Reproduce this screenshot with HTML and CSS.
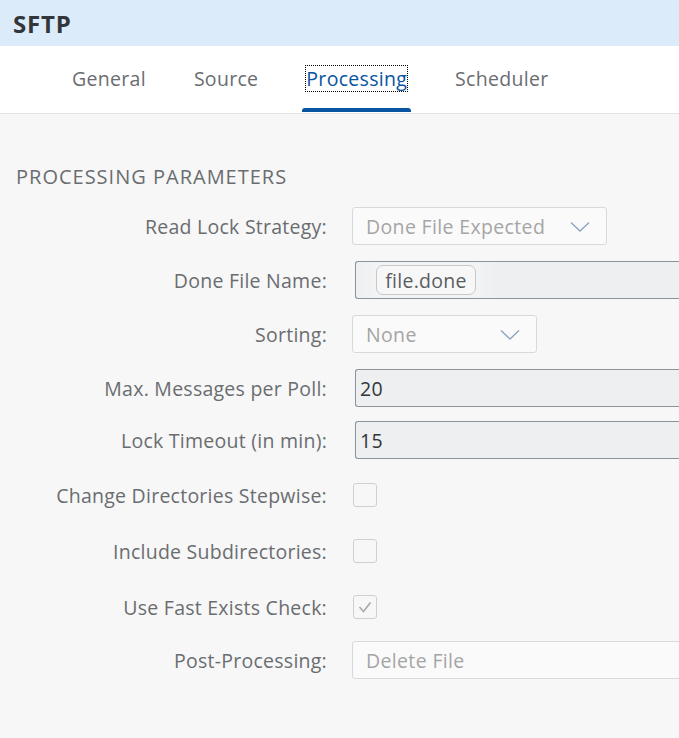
FILE: index.html
```html
<!DOCTYPE html>
<html>
<head>
<meta charset="utf-8">
<link rel="stylesheet" href="styles.css">
</head>
<body>
<div class="page">
  <header class="header"><h1 class="title">SFTP</h1></header>
  <nav class="tabs">
    <div class="tab">General</div>
    <div class="tab">Source</div>
    <div class="tab active"><span class="focus">Processing</span></div>
    <div class="tab">Scheduler</div>
  </nav>
  <main class="content">
    <h2 class="section">PROCESSING PARAMETERS</h2>
    <div class="form">
      <div class="label">Read Lock Strategy:</div>
      <div class="ctl"><div class="select w255"><span>Done File Expected</span><svg class="chev" viewBox="0 0 20 12" width="20" height="12"><path d="M1 1.5 L10 10 L19 1.5" fill="none" stroke="#8aa4c2" stroke-width="1.3"/></svg></div></div>

      <div class="label">Done File Name:</div>
      <div class="ctl"><div class="input tokens"><span class="token">file.done</span></div></div>

      <div class="label">Sorting:</div>
      <div class="ctl"><div class="select w185"><span>None</span><svg class="chev" viewBox="0 0 20 12" width="20" height="12"><path d="M1 1.5 L10 10 L19 1.5" fill="none" stroke="#8aa4c2" stroke-width="1.3"/></svg></div></div>

      <div class="label">Max. Messages per Poll:</div>
      <div class="ctl"><div class="input">20</div></div>

      <div class="label tight">Lock Timeout (in min):</div>
      <div class="ctl tight"><div class="input">15</div></div>

      <div class="label cbrow">Change Directories Stepwise:</div>
      <div class="ctl cbrow"><div class="checkbox"></div></div>

      <div class="label cbrow">Include Subdirectories:</div>
      <div class="ctl cbrow"><div class="checkbox"></div></div>

      <div class="label cbrow">Use Fast Exists Check:</div>
      <div class="ctl cbrow"><div class="checkbox"><svg viewBox="0 0 24 24" width="24" height="24"><path d="M6.5 12 L10.5 16.5 L17.5 7.5" fill="none" stroke="#ababab" stroke-width="1.7"/></svg></div></div>

      <div class="label tight">Post-Processing:</div>
      <div class="ctl tight"><div class="select wide"><span>Delete File</span></div></div>
    </div>
  </main>
</div>
</body>
</html>
```
FILE: styles.css
```css
* { box-sizing: border-box; }
html, body { margin: 0; padding: 0; }
body {
  font-family: "Open Sans", "Noto Sans", sans-serif;
  background: #f7f7f7;
  overflow: hidden;
  width: 679px;
  height: 738px;
}
.page { width: 679px; overflow: hidden; }
.header {
  height: 46px;
  background: #dcebf9;
  display: flex;
  align-items: center;
  padding-left: 13px;
}
.title {
  margin: 0;
  font-size: 24px;
  font-weight: 700;
  color: #32363a;
  letter-spacing: 0.8px;
}
.tabs {
  height: 68px;
  background: #fff;
  border-bottom: 1px solid #e2e2e2;
  display: flex;
  gap: 40px;
  padding-left: 68px;
}
.tab {
  position: relative;
  padding: 0 4px;
  font-size: 19.5px;
  letter-spacing: 0.3px;
  color: #6a6d70;
  display: flex;
  align-items: center;
  height: 67px;
  padding-bottom: 2px;
}
.tab.active { color: #0854a0; }
.tab.active::after {
  content: "";
  position: absolute;
  left: 0; right: 0; bottom: 1px;
  height: 4px;
  background: #0854a0;
  border-radius: 3px 3px 0 0;
}
.focus {
  outline: 1px dotted #000;
  outline-offset: 0;
  line-height: 25px;
  padding: 0;
}
.content { padding: 50px 0 0 0; }
.section {
  margin: 0 0 17px 16px;
  font-size: 20px;
  letter-spacing: 1px;
  font-weight: 400;
  color: #6a6d70;
  line-height: 26px;
}
.form {
  display: grid;
  grid-template-columns: 327px 1fr;
  column-gap: 25px;
  row-gap: 16px;
}
.tight { margin-top: -2px; }
.label {
  text-align: right;
  font-size: 19.5px;
  letter-spacing: 0.25px;
  color: #6a6d70;
  display: flex;
  align-items: center;
  justify-content: flex-end;
  height: 38px;
  white-space: nowrap;
}
.ctl { display: flex; align-items: center; height: 38px; min-width: 0; }
.cbrow { height: 40px; }
.select {
  height: 38px;
  border: 1px solid #d9d9d9;
  border-radius: 3px;
  background: #fafafa;
  display: flex;
  align-items: center;
  justify-content: space-between;
  padding: 0 16px 0 13px;
  font-size: 19.5px;
  letter-spacing: 0.35px;
  color: #a5a5a5;
}
.w255 { width: 255px; }
.w185 { width: 185px; }
.wide { width: 340px; flex: none; }
.chev { display: block; margin-top: 2px; }
.input {
  margin-left: 3px;
  width: 340px;
  flex: none;
  height: 38px;
  background: #edeff0;
  border: 1px solid #8c939b;
  border-right: none;
  border-radius: 3px 0 0 3px;
  display: flex;
  align-items: center;
  padding-left: 4px;
  font-size: 19.5px;
  letter-spacing: 0.4px;
  color: #32363a;
}
.tokens {
  padding-left: 20px;
  background: linear-gradient(90deg, #edeff0 0, #f2f3f4 20px, #f2f3f4 120px, #edeff0 140px);
}
.token {
  height: 30px;
  width: 100px;
  display: flex;
  align-items: center;
  justify-content: center;
  background: #f7f7f7;
  border: 1px solid #c8c8c8;
  border-radius: 7px;
  color: #5a5d60;
  font-size: 19.5px;
  letter-spacing: 0.3px;
}
.checkbox {
  margin-left: 1px;
  width: 24px;
  height: 24px;
  border: 1px solid #cfcfcf;
  border-radius: 3px;
  background: #f7f7f7;
}
.checkbox svg { display: block; margin: -1px; }
```
